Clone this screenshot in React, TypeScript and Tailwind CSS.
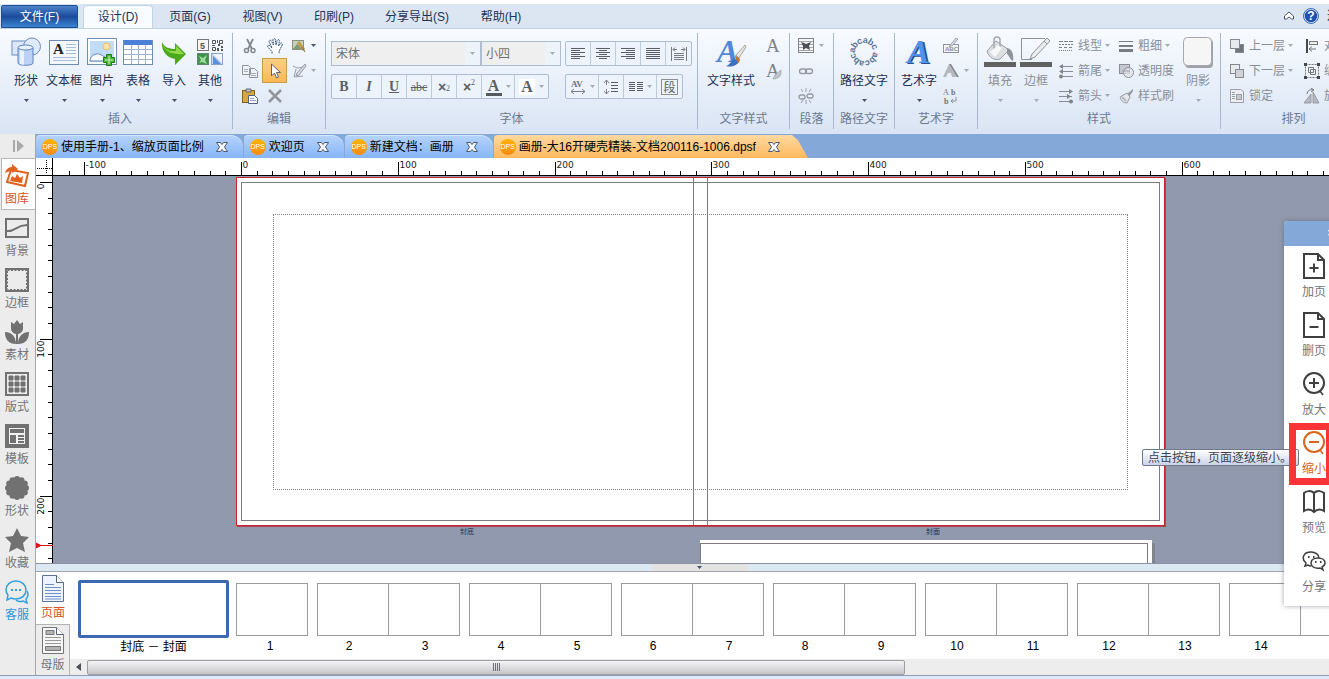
import React from 'react';

type Kids = { children?: React.ReactNode };

/* ---------- small building blocks ---------- */

function Caret({ dim = false, className = '' }: { dim?: boolean; className?: string }) {
  return (
    <svg viewBox="0 0 5 3" className={`w-[5px] h-[3px] shrink-0 ${className}`} aria-hidden="true">
      <path d="M0 0h5L2.5 3z" fill={dim ? '#a3abb8' : '#44526b'} />
    </svg>
  );
}

function Svg({ size = 16, children }: Kids & { size?: number }) {
  return (
    <svg width={size} height={size} viewBox={`0 0 ${size} ${size}`} fill="none" className="shrink-0" aria-hidden="true">
      {children}
    </svg>
  );
}

function Group({ title, className = '', children }: Kids & { title: string; className?: string }) {
  return (
    <section aria-label={title} className={`h-[96px] shrink-0 flex flex-col border-r border-[#a9b8cd] ${className}`}>
      <div className="h-[78px] flex">{children}</div>
      <div className="text-center leading-4 text-[#6b7a92]">{title}</div>
    </section>
  );
}

function BigButton({ label, icon, caret = true, dim = false, className = 'w-9' }: {
  label: string; icon: React.ReactNode; caret?: boolean; dim?: boolean; className?: string;
}) {
  return (
    <button type="button" className={`h-[78px] shrink-0 flex flex-col items-center whitespace-nowrap ${className}`}>
      <span className="h-[38px] flex items-center">{icon}</span>
      <span className={`mt-0.5 leading-4 ${dim ? 'text-[#8a8f97]' : 'text-[#1c3257]'}`}>{label}</span>
      {caret && <Caret dim={dim} className="mt-2.5" />}
    </button>
  );
}

function SmallButton({ label, className = '', children }: Kids & { label: string; className?: string }) {
  return (
    <button type="button" aria-label={label} className={`h-[25px] shrink-0 flex items-center justify-center ${className}`}>
      {children}
    </button>
  );
}

function ListButton({ label, icon, caret = false }: { label: string; icon: React.ReactNode; caret?: boolean }) {
  return (
    <button type="button" className="h-[25px] flex items-center whitespace-nowrap text-[#8a8f97]">
      {icon}
      <span className="ml-1">{label}</span>
      {caret && <Caret dim className="ml-[3px]" />}
    </button>
  );
}

function ToolStrip({ children }: Kids) {
  return (
    <div className="h-[25px] flex border border-[#adbdd2] rounded-xs divide-x divide-[#bccadc] bg-[#edf3fa] text-[#5c5f66]">
      {children}
    </div>
  );
}

function Cell({ label, caret = false, children }: Kids & { label: string; caret?: boolean }) {
  return (
    <button type="button" aria-label={label} className={`flex items-center justify-center ${caret ? 'w-[33px] gap-1' : 'w-[25px]'}`}>
      {children}
      {caret && <Caret dim />}
    </button>
  );
}

function Picker({ label, value, className }: { label: string; value: string; className: string }) {
  return (
    <label className={`relative block h-[25px] ${className}`}>
      <select aria-label={label} className="w-full h-full appearance-none rounded-none border border-[#adbdd2] bg-[#efefef] pl-1 pr-4 text-[#6f6f6f]">
        <option>{value}</option>
      </select>
      <span className="pointer-events-none absolute inset-y-px right-px w-[15px] flex items-center justify-center bg-[#eef3fa]">
        <Caret dim />
      </span>
    </label>
  );
}

const SERIF = 'Liberation Serif, serif';
const SANS = 'Liberation Sans, sans-serif';

/* ---------- ribbon icons ---------- */

const ShapesIcon = () => (
  <Svg size={30}>
    <rect x="1" y="4" width="17" height="14" fill="#dce8f8" stroke="#6a8dbd" />
    <circle cx="21" cy="9.500" r="8.500" fill="#dfeafa" stroke="#6a8dbd" />
    <path d="M7 11v15c0 3 15 3 15 0V11z" fill="#bcd3f5" stroke="#5d82bd" />
    <path d="M9 12v15l4 1V12z" fill="#fff" opacity=".7" />
    <ellipse cx="14.500" cy="10.500" rx="7.500" ry="2.500" fill="#e9f2ff" stroke="#5d82bd" />
  </Svg>
);

const TextBoxIcon = () => (
  <Svg size={30}>
    <rect x=".5" y="3.500" width="29" height="24" fill="#f4f8fd" stroke="#6f8db5" />
    <path d="M17 7.500h10M17 10.500h10M17 13.500h10M17 16.500h10M4 20.500h23M4 23.500h23" stroke="#a9bcd8" />
    <text x="4" y="17" fontSize="15" fontWeight="700" fill="#222" fontFamily={SERIF}>A</text>
  </Svg>
);

const PictureIcon = () => (
  <Svg size={30}>
    <rect x=".5" y="1.500" width="29" height="26" fill="#fff" stroke="#6f8db5" />
    <rect x="3" y="4" width="24" height="21" fill="#c1dcf6" />
    <circle cx="19.500" cy="9.500" r="3.500" fill="#fbe3a8" stroke="#eebf6d" />
    <path d="M3 24c0-4 3-6 6-7 4-1 6 2 9 3l4 4z" fill="#fff" stroke="#5980ba" />
    <path d="M19.500 17.500h5v3h3v5h-3v3h-5v-3h-3v-5h3z" fill="#4cb83b" stroke="#21791c" />
    <path d="M22 19v8M18 23h8" stroke="#c6f3b5" />
  </Svg>
);

const TableIcon = () => (
  <Svg size={30}>
    <rect x=".5" y="3.500" width="29" height="24" fill="#fff" stroke="#6f8db5" />
    <path d="M1 3h28v5H1z" fill="#4d7fd6" />
    <path d="M1 12.500h28M1 17.500h28M1 22.500h28M8.500 8v19M15.500 8v19M22.500 8v19" stroke="#9fb3cf" />
  </Svg>
);

const ImportIcon = () => (
  <Svg size={28}>
    <path d="M2 4c2 5 7 7 13 7V5l11 11-11 11v-6C7 20 1 13 2 4z" fill="#4ea81b" />
    <path d="M3 7c3 6 7 6 13 6V8l8 8C13 17 5 14 3 7z" fill="#8edb4a" />
  </Svg>
);

const OtherIcon = () => (
  <Svg size={28}>
    <rect x="1.500" y="1.500" width="11" height="11" fill="#f6f6f6" stroke="#777" />
    <text x="4" y="10.500" fontSize="9" fontWeight="700" fill="#555" fontFamily={SANS}>5</text>
    <path d="M16.500 2.500h3v3h-3zM23.500 2.500h3v3h-3zM16.500 9.500h3v3h-3z" stroke="#555" />
    <path d="M21 2h1v3h-1zM22 6h2v2h-2zM25 8h2v2h-2zM21 10h2v3h-2zM25 11h2v2h-2zM16 7h3v1h-3z" fill="#555" />
    <rect x="1.500" y="15.500" width="11" height="11" fill="#3b9448" stroke="#60856b" />
    <path d="M3 18l4 2 4-3-2 5 2 4-5-2-3 1 2-3z" fill="#9fdca0" />
    <rect x="15.500" y="15.500" width="11" height="11" fill="#c3d6f5" stroke="#8aa2cc" />
    <path d="M17 16h9v9z" fill="#f0f5fd" />
    <path d="M17 18l8 8h-8z" fill="#5f8be0" />
  </Svg>
);

const CutIcon = () => (
  <Svg>
    <path d="M5 1l5 10M11 1L6 11" stroke="#83878e" strokeWidth="1.800" />
    <circle cx="4.500" cy="12.500" r="2" stroke="#83878e" strokeWidth="1.500" />
    <circle cx="11" cy="12.500" r="2" stroke="#83878e" strokeWidth="1.500" />
  </Svg>
);

const HandIcon = () => (
  <Svg>
    <path d="M5 15.500v-2L.8 9c-.8-1.500 1-2.500 2.400-1L5 10 2.200 4c-.6-1.800 1.600-2.400 2.300-.8L6.500 7 6 2C6 .2 8.200.2 8.400 2L9 7l1.200-4.500c.5-1.600 2.500-1 2.200.7L11.500 8l2-2.500c1-1.200 2.500 0 1.700 1.300L12 13.500v2" fill="#fff" stroke="#34537c" strokeDasharray="2 .6" />
  </Svg>
);

const EditPictureIcon = () => (
  <Svg>
    <rect x="1.500" y="2.500" width="11" height="9" fill="#c3d4bb" stroke="#8a8f80" />
    <path d="M2 11l4-5 5 5z" fill="#7f9a75" />
    <path d="M7 4l6 8" stroke="#c39a4b" strokeWidth="3" />
    <path d="M11 9l3 5" stroke="#7c6a4c" />
  </Svg>
);

const CopyIcon = () => (
  <Svg>
    <path d="M.5 2.500h6l2 2v7h-8zM7.500 5.500h5l3 3v6h-8z" fill="#eef1f5" stroke="#8e949e" />
    <path d="M2 6.500h4M2 8.500h4M9 10.500h5M9 12.500h5" stroke="#a7adb6" />
  </Svg>
);

const PointerIcon = () => (
  <Svg>
    <path d="M4.500 1v12l3-3 2 5 2-1-2-4.500h4z" fill="#fff" stroke="#56617a" />
  </Svg>
);

const NodeEditIcon = () => (
  <Svg>
    <path d="M2 3l4 2 7-1M3 14l2-8M3 14l9-1" stroke="#9aa0a9" />
    <path d="M14 1L6 10l-1 3 3-1 7-9z" fill="#d5d9df" stroke="#989ea7" />
  </Svg>
);

const PasteIcon = () => (
  <Svg size={18}>
    <rect x="1.500" y="3.500" width="12" height="12" fill="#d9a83c" stroke="#816321" />
    <path d="M5 2h5v3H5z" fill="#bcc2cc" stroke="#666" />
    <path d="M7.500 8.500h6l3 3v5h-9z" fill="#fff" stroke="#4d6186" />
    <path d="M9 11.500h4M9 13.500h6" stroke="#8ca0c2" />
  </Svg>
);

const DeleteIcon = () => (
  <Svg>
    <path d="M2 2l12 12M14 2L2 14" stroke="#929499" strokeWidth="2.500" />
  </Svg>
);

function LinesIcon({ rows }: { rows: [number, number][] }) {
  return (
    <Svg>
      {rows.map(([a, b], i) => (
        <path key={i} d={`M${a} ${2.5 + i * 2}H${b}`} stroke="#595d64" />
      ))}
    </Svg>
  );
}

const ALIGN: { label: string; rows: [number, number][] }[] = [
  { label: '左对齐', rows: [[1, 15], [1, 10], [1, 15], [1, 10], [1, 15], [1, 10]] },
  { label: '居中', rows: [[1, 15], [4, 12], [1, 15], [4, 12], [1, 15], [4, 12]] },
  { label: '右对齐', rows: [[1, 15], [6, 15], [1, 15], [6, 15], [1, 15], [6, 15]] },
  { label: '两端对齐', rows: [[1, 15], [1, 15], [1, 15], [1, 15], [1, 15], [1, 15]] },
];

const JustifyAllIcon = () => (
  <Svg>
    <path d="M.5 1v14M15.500 1v14M3 7.500h10M3 9.500h10M3 11.500h10M3 13.500h10" stroke="#777b82" />
    <path d="M2 3.500h4M10 3.500h4M4 1.500l-2 2 2 2M12 1.500l2 2-2 2" stroke="#777b82" />
  </Svg>
);

const SpacingIcon = () => (
  <Svg>
    <text x="1" y="8" fontSize="9" fontWeight="700" fill="#6b6e74" fontFamily={SERIF}>AV</text>
    <path d="M1 12.500h14M4 10l-3 2.500L4 15M12 10l3 2.500-3 2.500" stroke="#7b7f86" />
  </Svg>
);

const LineHeightIcon = () => (
  <Svg>
    <path d="M3.500 1v5M3.500 10v5M1 4l2.500-3L6 4M1 12l2.500 3L6 12" stroke="#7b7f86" />
    <path d="M8 3.500h7M8 6.500h7M8 9.500h7M8 12.500h7" stroke="#595d64" />
  </Svg>
);

const ColumnsIcon = () => (
  <Svg size={14}>
    <path d="M0 2.500h6M8 2.500h6M0 4.500h6M8 4.500h6M0 6.500h6M8 6.500h6M0 8.500h6M8 8.500h6M0 10.500h6M8 10.500h6" stroke="#595d64" />
  </Svg>
);

const TextStyleIcon = () => (
  <Svg size={32}>
    <text x="2" y="26" fontSize="32" fontWeight="700" fontStyle="italic" fill="#4f87da" fontFamily={SERIF}>A</text>
    <path d="M30 9l-9 10 3 3 7-11z" fill="#e9e5df" stroke="#8d8478" strokeWidth=".7" />
    <path d="M20 19l5 4c0 3-2 5-4 5z" fill="#b9783a" />
    <path d="M19 22l4 4c-2 5-8 5-12 4 4-1 5-5 8-8z" fill="#3f6fbf" />
  </Svg>
);

function LetterA({ brush = false }: { brush?: boolean }) {
  return (
    <Svg size={18}>
      <text x="2" y="15" fontSize="19" fill="#7f838a" fontFamily={SERIF}>A</text>
      {brush && <path d="M17 8l-6 5-2 4c4 0 7-2 8-5z" fill="#c2c6cc" stroke="#9499a1" strokeWidth=".6" />}
    </Svg>
  );
}

const WrapIcon = () => (
  <Svg>
    <rect x=".5" y=".5" width="15" height="14" fill="#f5f5f5" stroke="#80848b" />
    <path d="M1 3.500h14M1 6.500h14M1 9.500h14M1 12.500h14" stroke="#a4a8ae" />
    <path d="M3 4l3 1 2 1 5-2-2 4 1 4-4-2-3 2v-4z" fill="#4b4e54" />
  </Svg>
);

const LinkIcon = () => (
  <Svg>
    <rect x="1.500" y="6" width="7" height="4.500" rx="2.200" stroke="#969ba3" strokeWidth="1.400" />
    <rect x="7.500" y="6" width="7" height="4.500" rx="2.200" stroke="#969ba3" strokeWidth="1.400" />
  </Svg>
);

const UnlinkIcon = () => (
  <Svg>
    <rect x="1" y="7" width="6" height="4" rx="2" stroke="#969ba3" strokeWidth="1.300" />
    <rect x="9" y="6" width="6" height="4" rx="2" stroke="#969ba3" strokeWidth="1.300" />
    <path d="M8 0v4M3 1l2 3M13 1l-2 3M8 12v4M3 15l2-3M13 15l-2-3" stroke="#9da2a9" />
  </Svg>
);

const PathTextIcon = () => (
  <Svg size={32}>
    {'abcabcabcabc'.split('').map((ch, i) => (
      <text key={i} x="16" y="7" textAnchor="middle" fontSize="9" fontWeight="700" fill="#5b7495" fontFamily={SANS} transform={`rotate(${i * 29 - 255} 16 16)`}>
        {ch}
      </text>
    ))}
  </Svg>
);

const ArtIcon = () => (
  <Svg size={32}>
    <text x="6" y="28" fontSize="34" fontWeight="700" fontStyle="italic" fill="#2a4f94" fontFamily={SERIF}>A</text>
    <text x="4" y="27" fontSize="34" fontWeight="700" fontStyle="italic" fill="#4f93ee" fontFamily={SERIF}>A</text>
  </Svg>
);

const ArtEditIcon = () => (
  <Svg>
    <rect x=".5" y="6.500" width="15" height="8" fill="#f3f4f6" stroke="#8f949c" />
    <text x="2" y="13" fontSize="6" fontWeight="700" fill="#8a8e95" fontFamily={SANS}>ABC</text>
    <path d="M13 0L8 6 6 9l4-2 5-6z" fill="#d9dce1" stroke="#8f949c" strokeWidth=".8" />
  </Svg>
);

const ArtShapeIcon = () => (
  <Svg>
    <path d="M6 1L0 14h3l2-4h3l1 4h5z" fill="#b5b9bf" />
    <path d="M6 1l8 13h2L8 1z" fill="#80858d" />
  </Svg>
);

const CaseIcon = () => (
  <Svg>
    <text x="0" y="7" fontSize="8" fontWeight="700" fill="#999ea6" fontFamily={SERIF}>A</text>
    <text x="8" y="7" fontSize="8" fontWeight="700" fill="#6f747c" fontFamily={SERIF}>b</text>
    <text x="1" y="16" fontSize="8" fontWeight="700" fill="#6f747c" fontFamily={SERIF}>b</text>
    <path d="M8 13h5v-4M10 11l-2 2 2 2" stroke="#8a8f97" />
  </Svg>
);

const FillIcon = () => (
  <Svg size={32}>
    <path d="M12 5L3 15c2 7 8 10 13 8l9-9z" fill="#dcdee2" stroke="#9b9fa6" />
    <path d="M10 13V4c0-4 6-4 6 0v9" stroke="#a4a8ae" strokeWidth="1.500" />
    <path d="M23 12c5 1 7 6 6 13-3-1-4-6-6-7z" fill="#909399" />
    <path d="M6 16l8-7 4 3-7 9z" fill="#f6f7f8" />
    <path d="M0 26h32v5H0z" fill="#606163" />
  </Svg>
);

const BorderIcon = () => (
  <Svg size={32}>
    <path d="M25 2.500H1.500v21H12" stroke="#8f9399" />
    <path d="M27 2l3 3L15 21l-5 2 2-5z" fill="#ebecee" stroke="#909399" />
    <path d="M24 5l3 3" stroke="#909399" />
    <path d="M0 26h32v5H0z" fill="#606163" />
  </Svg>
);

const LineTypeIcon = () => (
  <Svg>
    <path d="M1 3.500h14" stroke="#7d8188" strokeDasharray="4 1" />
    <path d="M1 6.500h14" stroke="#7d8188" strokeDasharray="2 1" />
    <path d="M1 9.500h14" stroke="#7d8188" strokeDasharray="3 2" />
    <path d="M1 12.500h14" stroke="#7d8188" strokeDasharray="1 1" />
  </Svg>
);

const TailIcon = () => (
  <Svg>
    <path d="M3 3.500h12M3 8.500h12M3 13.500h12" stroke="#898d94" />
    <path d="M5 1L1 3.500 5 6zM5 6L1 8.500 5 11z" fill="#7f838a" />
    <circle cx="3" cy="13.500" r="2" fill="#7f838a" />
  </Svg>
);

const HeadIcon = () => (
  <Svg>
    <path d="M1 3.500h13M1 8.500h13M1 13.500h13" stroke="#898d94" />
    <path d="M11 1l4 2.500L11 6zM9 6l4 2.500L9 11z" fill="#7f838a" />
    <circle cx="13" cy="13.500" r="2" fill="#7f838a" />
  </Svg>
);

const WeightIcon = () => (
  <Svg>
    <path d="M1 3.500h14" stroke="#777b82" />
    <path d="M1 8h14" stroke="#777b82" strokeWidth="2" />
    <path d="M1 12.500h14" stroke="#777b82" strokeWidth="3" />
  </Svg>
);

const OpacityIcon = () => (
  <Svg>
    <rect x="1.500" y="1.500" width="10" height="9" fill="#c5c9cf" stroke="#8a8f97" />
    <circle cx="10.500" cy="9.500" r="5" fill="#e3e5e9" fillOpacity=".7" stroke="#8a8f97" />
    <path d="M4 8h8" stroke="#a2a6ad" />
  </Svg>
);

const FormatBrushIcon = () => (
  <Svg>
    <path d="M15 1l-6 5 2 3 4-6z" fill="#94989f" />
    <path d="M9 5L2 9c1 4 4 6 7 6l3-6z" fill="#e6e8eb" stroke="#999ea5" />
    <path d="M4 9l4 4" stroke="#b5b9bf" strokeWidth="2" />
  </Svg>
);

const ShadowIcon = () => (
  <Svg size={32}>
    <rect x="3" y="3" width="28" height="29" rx="4" fill="#9fa3a9" />
    <rect x="1.500" y="1.500" width="28" height="28" rx="4" fill="#f6f6f6" stroke="#a5a8ad" />
  </Svg>
);

function StackIcon({ front }: { front: boolean }) {
  return (
    <Svg>
      <rect x="6.500" y="6.500" width="8" height="8" fill={front ? '#6f737a' : '#e8eaed'} stroke="#858a92" />
      <rect x="1.500" y="1.500" width="9" height="9" fill="#e8eaed" stroke="#858a92" />
      {!front && <rect x="6.500" y="6.500" width="8" height="8" fill="#d0d3d8" stroke="#858a92" />}
    </Svg>
  );
}

const LockIcon = () => (
  <Svg>
    <path d="M1.500 1.500h10l3 2v11h-13z" fill="#eceef1" stroke="#9ba0a7" />
    <path d="M3 4.500h3M3 6.500h3M3 8.500h3M3 10.500h3" stroke="#9ba0a7" />
    <rect x="7.500" y="6.500" width="5" height="5" fill="#c5c8cd" stroke="#9ba0a7" />
  </Svg>
);

const AlignObjIcon = () => (
  <Svg>
    <path d="M3 1v14" stroke="#45484d" strokeWidth="2" />
    <rect x="5.500" y="3.500" width="8" height="3" fill="#eee" stroke="#777" />
    <path d="M12 11H5M8 8.500L5 11l3 2.500" stroke="#777" />
  </Svg>
);

const GroupObjIcon = () => (
  <Svg>
    <path d="M1.500 1.500h13v13h-13z" stroke="#777" strokeDasharray="2 1" />
    <path d="M4.500 4.500h5v5h-5zM6.500 6.500h5v5h-5z" stroke="#777" />
    <path d="M0 0h3v3H0zM13 0h3v3h-3zM0 13h3v3H0zM13 13h3v3h-3z" fill="#44474d" />
  </Svg>
);

const RotateIcon = () => (
  <Svg>
    <path d="M7 6v9H0zM9 4l6 11H9z" fill="#b6bac0" stroke="#8a8f97" strokeWidth=".8" />
    <path d="M3 6c0-3 3-5 6-4M7 0l3 2-3 2" stroke="#777" />
  </Svg>
);

/* ---------- header ---------- */

const MENU = [
  { label: '页面(G)', w: 'w-[74px]' },
  { label: '视图(V)', w: 'w-[71px]' },
  { label: '印刷(P)', w: 'w-[72px]' },
  { label: '分享导出(S)', w: 'w-[94px]' },
  { label: '帮助(H)', w: 'w-[74px]' },
];

function MenuBar() {
  return (
    <nav className="flex h-6 bg-[#dbe6f2] text-[#1c3257] overflow-hidden whitespace-nowrap">
      <button type="button" className="ml-px mt-px w-[77px] shrink-0 rounded-t-xs border border-[#1f4c93] bg-linear-to-b from-[#4d83cb] via-[#1c4b9b] via-50% to-[#3b84cf] text-white">
        文件(F)
      </button>
      <button type="button" className="ml-[5px] mt-px w-[70px] shrink-0 rounded-t-sm border border-b-0 border-[#c3d3e6] bg-[#f9fcff]">设计(D)</button>
      {MENU.map((m) => (
        <button key={m.label} type="button" className={`shrink-0 pt-0.5 ${m.w}`}>{m.label}</button>
      ))}
      <div className="ml-auto shrink-0 flex items-center">
        <button type="button" aria-label="收起功能区" className="mr-2">
          <Svg size={12}>
            <path d="M1.500 6L6 2l4.500 4v3H8.500L6 7 3.500 9h-2z" fill="#fff" stroke="#45536b" />
          </Svg>
        </button>
        <button type="button" aria-label="帮助">
          <Svg>
            <circle cx="8" cy="8" r="7" fill="#1f52ae" stroke="#d4e2f6" strokeWidth="1.500" />
            <circle cx="8" cy="8" r="7.500" stroke="#426bb0" />
            <text x="8" y="12" textAnchor="middle" fontSize="12" fontWeight="700" fill="#fff" fontFamily={SANS}>?</text>
          </Svg>
        </button>
        <button type="button" className="ml-2 -mr-[22px]">选项</button>
      </div>
    </nav>
  );
}

function Ribbon() {
  return (
    <div className="h-[106px] shrink-0 flex overflow-hidden border-t border-[#c3d3e6] bg-linear-to-b from-[#f8fbff] to-[#d9e4f4] pt-1">
      <Group title="插入" className="w-[233px] pl-2">
        <BigButton label="形状" icon={<ShapesIcon />} />
        <BigButton label="文本框" icon={<TextBoxIcon />} className="w-10" />
        <BigButton label="图片" icon={<PictureIcon />} />
        <BigButton label="表格" icon={<TableIcon />} />
        <BigButton label="导入" icon={<ImportIcon />} />
        <BigButton label="其他" icon={<OtherIcon />} />
      </Group>

      <Group title="编辑" className="w-[93px]">
        <div className="pl-1 flex">
          <div className="w-[25px]">
            <SmallButton label="剪切" className="w-full"><CutIcon /></SmallButton>
            <SmallButton label="复制" className="w-full"><CopyIcon /></SmallButton>
            <SmallButton label="粘贴" className="w-full"><PasteIcon /></SmallButton>
          </div>
          <div className="w-[25px]">
            <SmallButton label="平移" className="w-full"><HandIcon /></SmallButton>
            <SmallButton label="选择" className="w-full border border-[#c99c4e] bg-linear-to-b from-[#fbcf83] to-[#ffb852]"><PointerIcon /></SmallButton>
            <SmallButton label="删除" className="w-full"><DeleteIcon /></SmallButton>
          </div>
          <div className="pl-1">
            <SmallButton label="编辑图片" className="gap-1"><EditPictureIcon /><Caret /></SmallButton>
            <SmallButton label="编辑节点" className="gap-1"><NodeEditIcon /><Caret dim /></SmallButton>
          </div>
        </div>
      </Group>

      <Group title="字体" className="w-[372px]">
        <div className="flex flex-col gap-2 pl-[5px] pt-2">
          <div className="flex">
            <Picker label="字体" value="宋体" className="w-[150px]" />
            <Picker label="字号" value="小四" className="w-20" />
            <div className="ml-1">
              <ToolStrip>
                {ALIGN.map((a) => (
                  <Cell key={a.label} label={a.label}><LinesIcon rows={a.rows} /></Cell>
                ))}
                <Cell label="分散对齐"><JustifyAllIcon /></Cell>
              </ToolStrip>
            </div>
          </div>
          <div className="flex font-['Liberation_Serif',serif]">
            <ToolStrip>
              <Cell label="加粗"><b className="text-sm">B</b></Cell>
              <Cell label="斜体"><b className="text-sm italic">I</b></Cell>
              <Cell label="下划线"><b className="text-sm underline">U</b></Cell>
              <Cell label="删除线"><span className="line-through">abc</span></Cell>
              <Cell label="下标"><b className="text-sm font-['Liberation_Sans',sans-serif]">×</b><sub className="text-[8px]">2</sub></Cell>
              <Cell label="上标"><b className="text-sm font-['Liberation_Sans',sans-serif]">×</b><sup className="text-[8px]">2</sup></Cell>
              <Cell label="文字颜色" caret><b className="w-4 border-b-3 border-[#55585e] text-base leading-[15px]">A</b></Cell>
              <Cell label="背景颜色" caret><b className="w-4 bg-white text-base leading-4">A</b></Cell>
            </ToolStrip>
            <div className="ml-4">
              <ToolStrip>
                <Cell label="字间距" caret><SpacingIcon /></Cell>
                <Cell label="行距"><LineHeightIcon /></Cell>
                <Cell label="分栏" caret><ColumnsIcon /></Cell>
                <Cell label="段落"><span className="border border-[#8b8f96] px-px leading-[14px] font-['Noto_Sans_CJK_SC',sans-serif]">段</span></Cell>
              </ToolStrip>
            </div>
          </div>
        </div>
      </Group>

      <Group title="文字样式" className="w-[92px]">
        <BigButton label="文字样式" icon={<TextStyleIcon />} caret={false} className="w-[66px]" />
        <div>
          <SmallButton label="新建样式"><LetterA /></SmallButton>
          <SmallButton label="修改样式"><LetterA brush /></SmallButton>
        </div>
      </Group>

      <Group title="段落" className="w-11">
        <div className="pl-2">
          <SmallButton label="绕排" className="gap-[5px]"><WrapIcon /><Caret dim /></SmallButton>
          <SmallButton label="链接"><LinkIcon /></SmallButton>
          <SmallButton label="断开链接"><UnlinkIcon /></SmallButton>
        </div>
      </Group>

      <Group title="路径文字" className="w-[61px]">
        <BigButton label="路径文字" icon={<PathTextIcon />} className="w-[60px]" />
      </Group>

      <Group title="艺术字" className="w-[83px]">
        <BigButton label="艺术字" icon={<ArtIcon />} className="w-12" />
        <div>
          <SmallButton label="编辑艺术字"><ArtEditIcon /></SmallButton>
          <SmallButton label="艺术字形状" className="gap-[5px]"><ArtShapeIcon /><Caret dim /></SmallButton>
          <SmallButton label="大小写"><CaseIcon /></SmallButton>
        </div>
      </Group>

      <Group title="样式" className="w-[243px]">
        <BigButton label="填充" icon={<FillIcon />} dim className="w-11" />
        <BigButton label="边框" icon={<BorderIcon />} dim className="w-7" />
        <div className="pl-2">
          <ListButton label="线型" icon={<LineTypeIcon />} caret />
          <ListButton label="箭尾" icon={<TailIcon />} caret />
          <ListButton label="箭头" icon={<HeadIcon />} caret />
        </div>
        <div className="pl-2">
          <ListButton label="粗细" icon={<WeightIcon />} caret />
          <ListButton label="透明度" icon={<OpacityIcon />} />
          <ListButton label="样式刷" icon={<FormatBrushIcon />} />
        </div>
        <BigButton label="阴影" icon={<ShadowIcon />} dim className="ml-auto w-11" />
      </Group>

      <Group title="排列" className="w-[146px]">
        <div className="pl-2">
          <ListButton label="上一层" icon={<StackIcon front />} caret />
          <ListButton label="下一层" icon={<StackIcon front={false} />} caret />
          <ListButton label="锁定" icon={<LockIcon />} />
        </div>
        <div className="pl-[11px]">
          <ListButton label="对齐" icon={<AlignObjIcon />} />
          <ListButton label="编组" icon={<GroupObjIcon />} />
          <ListButton label="旋转" icon={<RotateIcon />} />
        </div>
      </Group>
    </div>
  );
}

/* ---------- left sidebar ---------- */

const LOBES = Array.from({ length: 12 }, (_, i) => {
  const a = (i * Math.PI) / 6;
  return { x: 12 + 9 * Math.cos(a), y: 12 + 9 * Math.sin(a) };
});

const SIDEBAR = [
  {
    label: '图库',
    icon: (
      <g>
        <path d="M6 6l17 3-3 13L2 18z" stroke="#e2621b" strokeWidth="2" fill="#fff" />
        <path d="M5 17l2-5 3 2 2-4 3 4 3-2-1 7z" fill="#e2621b" />
        <path d="M0 9c1-4 4-6 7-6V0l6 5-6 4V7C4 7 2 8 0 9z" fill="#e2621b" />
      </g>
    ),
  },
  { label: '背景', icon: <g stroke="#717171" strokeWidth="2"><path d="M1 3h22v18H1z" /><path d="M2 15c8 1 9-6 20-6" /></g> },
  {
    label: '边框',
    icon: (
      <g stroke="#717171">
        <path d="M1 1h22v22H1z" strokeWidth="2" />
        <path d="M2.500 2.500h19v19h-19z" strokeDasharray="2 1.500" />
      </g>
    ),
  },
  {
    label: '素材',
    icon: (
      <g fill="#717171">
        <path d="M6 2l3 2 3-4 3 4 3-2v6c0 4-3 6-6 6s-6-2-6-6z" />
        <path d="M11 13h2v11h-2z" />
        <path d="M11 24C4 24 0 20 0 12c6 0 11 4 11 12zM13 24c7 0 11-4 11-12-6 0-11 4-11 12z" />
      </g>
    ),
  },
  {
    label: '版式',
    icon: (
      <g>
        <path d="M1 1h22v22H1z" stroke="#717171" strokeWidth="2" />
        <path d="M4 4h4v4H4zM10 4h4v4h-4zM16 4h4v4h-4zM4 10h4v4H4zM10 10h4v4h-4zM16 10h4v4h-4zM4 16h4v4H4zM10 16h4v4h-4zM16 16h4v4h-4z" fill="#717171" stroke="#717171" />
      </g>
    ),
  },
  {
    label: '模板',
    icon: (
      <g fill="#717171">
        <path d="M0 0h24v24H0z" />
        <path d="M4 4h16v16H4z" fill="#f2f2f2" />
        <path d="M5 5h14v4H5zM5 11h6v8H5zM13 11h6v2h-6zM13 14h6v2h-6zM13 17h6v2h-6z" />
      </g>
    ),
  },
  {
    label: '形状',
    icon: (
      <g fill="#717171">
        <circle cx="12" cy="12" r="10" />
        {LOBES.map((p, i) => <circle key={i} cx={p.x} cy={p.y} r="3" />)}
      </g>
    ),
  },
  { label: '收藏', icon: <path d="M12 0l4 8 8 1-6 6 2 9-8-4-8 4 2-9-6-6 8-1z" fill="#717171" /> },
  {
    label: '客服',
    icon: (
      <g stroke="#35a0e0" strokeWidth="1.500">
        <path d="M11 1c6 0 10 4 10 9s-4 9-10 9c-2 0-3 0-5-1l-4 2 1-5C1 13 1 12 1 10c0-5 4-9 10-9z" />
        <path d="M22 11c2 4 0 7-1 8l1 4-4-2c-3 1-5 1-7-1" />
        <path d="M6 10h2M10 10h2M14 10h2" strokeWidth="2" />
      </g>
    ),
  },
];

const sideTone = (label: string) => {
  if (label === '图库') return 'border-[#b9b9b9] bg-white text-[#d2561a]';
  if (label === '客服') return 'border-transparent text-[#2a97d8]';
  return 'border-transparent text-[#757575]';
};

function Sidebar() {
  return (
    <aside className="w-9 shrink-0 border-r border-[#a3a6ab] bg-[#ececec]">
      <button type="button" aria-label="展开" className="w-full h-6 flex items-center justify-center">
        <Svg size={14}>
          <path d="M2 1h2v12H2zM6 1l7 6-7 6z" fill="#a9a9a9" />
        </Svg>
      </button>
      {SIDEBAR.map((s) => (
        <button key={s.label} type="button" className={`ml-px w-[34px] h-[52px] flex flex-col items-center border border-r-0 pr-[3px] pt-[5px] ${sideTone(s.label)}`}>
          <Svg size={24}>{s.icon}</Svg>
          <span className="mt-[3px] leading-4">{s.label}</span>
        </button>
      ))}
    </aside>
  );
}

/* ---------- document tabs and rulers ---------- */

const DOCS = ['使用手册-1、缩放页面比例', '欢迎页', '新建文档：画册', '画册-大16开硬壳精装-文档200116-1006.dpsf'];

function DocTabs() {
  return (
    <div className="h-6 shrink-0 flex gap-px pt-px overflow-hidden bg-[#84a8d8]">
      {DOCS.map((d, i) => {
        const active = i === DOCS.length - 1;
        return (
          <div
            key={d}
            className={`flex shrink-0 items-center whitespace-nowrap pl-1.5 rounded-tl-sm text-black ${
              active
                ? 'pr-7 bg-linear-to-b from-[#ffd9a0] to-[#ffb95c] [clip-path:polygon(0_0,calc(100%-16px)_0,calc(100%-10px)_5px,100%_100%,0_100%)]'
                : 'pr-[15px] rounded-tr-xl border-t border-[#d5e5fb] bg-linear-to-b from-[#b4d2fb] to-[#86b6f7]'
            }`}
          >
            <span className="w-4 h-4 rounded-full bg-linear-to-b from-[#ffb400] to-[#f58a10] text-center text-[7px] leading-4 text-white">DPS</span>
            <span className="ml-[3px]">{d}</span>
            <button type="button" aria-label="关闭" className="ml-3">
              <Svg size={12}>
                <path d="M.5 1.500h4L6 3.500l1.500-2h4L8.500 6l3 4.500h-4L6 8.500l-1.500 2h-4l3-4.500z" fill="#f4f6f9" stroke="#4c5a70" />
              </Svg>
            </button>
          </div>
        );
      })}
    </div>
  );
}

const STEP = 156.8;

function ticks(origin: number, from: number, to: number) {
  const out: { pos: number; major: boolean; value: number }[] = [];
  for (let n = from; n <= to; n++) {
    out.push({ pos: Math.round(origin + (n * STEP) / 10) + 0.5, major: n % 10 === 0, value: n * 10 });
  }
  return out;
}

function HorizontalRuler() {
  return (
    <div className="h-[18px] shrink-0 flex bg-white">
      <svg width="17" height="18" className="shrink-0" aria-hidden="true">
        <path d="M1 10.500h15M10.500 2v14" stroke="#000" strokeDasharray="1 1" />
        <path d="M0 17.500h17M16.500 0v18" stroke="#000" />
      </svg>
      <svg height="18" className="flex-1 min-w-0 overflow-hidden" role="img" aria-label="水平标尺">
        <path d="M0 17.500h3000" stroke="#000" />
        {ticks(188, -11, 110).map((t) => (
          <g key={t.value}>
            <path d={`M${t.pos} ${t.major ? 4 : 13}V18`} stroke="#000" />
            {t.major && <text x={t.pos + 1} y="10" fontSize="9" fontFamily="DejaVu Sans, sans-serif" fill="#222">{t.value}</text>}
          </g>
        ))}
      </svg>
    </div>
  );
}

function VerticalRuler() {
  return (
    <svg width="17" className="h-full shrink-0 bg-white overflow-hidden" role="img" aria-label="垂直标尺">
      <path d="M16.500 0v3000" stroke="#000" />
      {ticks(6, 0, 60).map((t) => (
        <g key={t.value}>
          <path d={`M${t.major ? 4 : 12} ${t.pos}H17`} stroke="#000" />
          {t.major && (
            <text textAnchor="end" transform={`translate(8 ${t.pos + 1}) rotate(-90)`} fontSize="9" fontFamily="DejaVu Sans, sans-serif" fill="#000">
              {t.value}
            </text>
          )}
        </g>
      ))}
      <path d="M0 369.500h17" stroke="#e01010" />
      <path d="M0 366.500l6 3-6 3z" fill="#e01010" />
    </svg>
  );
}

/* ---------- canvas: sheets sit at free positions ---------- */

function Canvas() {
  return (
    <div className="relative flex-1 min-w-0 overflow-hidden bg-[#9099ae]">
      <div className="absolute left-[183px] top-px w-[929px] h-[349px] border border-[#c9252f] bg-white shadow-[1px_1px_0_#b5404d]">
        <div className="absolute inset-1 border border-[#7c7c80]" />
        <div className="absolute left-[456px] inset-y-0 w-[15px] border-x border-[#7c7c80]" />
        <div className="absolute left-9 top-9 w-[855px] h-[276px] border border-dotted border-[#808080]" />
      </div>
      <span className="absolute left-[407px] top-[351px] text-[7px] leading-[9px] text-[#2c3140]">封底</span>
      <span className="absolute left-[873px] top-[351px] text-[7px] leading-[9px] text-[#2c3140]">封面</span>
      <div className="absolute left-[647px] top-[364px] w-[452px] h-[60px] bg-white pr-1 pt-[3px] shadow-[3px_3px_0_#80848e]">
        <div className="h-full border border-[#7c7c80]" />
      </div>
    </div>
  );
}

/* ---------- page strip ---------- */

const SPREADS = [[2, 3], [4, 5], [6, 7], [8, 9], [10, 11], [12, 13], [14, 15]];

function PageIcon({ master = false }: { master?: boolean }) {
  return (
    <svg width="22" height="27" viewBox="0 0 22 27" fill="none" aria-hidden="true">
      <path d="M.5.5h14l7 7v19H.5z" fill={master ? '#f5f5f5' : '#eef4fd'} stroke={master ? '#777' : '#5d7299'} />
      <path d="M14.500.5v7h7" fill="#fff" stroke="#55617a" />
      {master ? (
        <g stroke="#777">
          <path d="M4 3.500h8v4H4zM3.500 19.500h15v4h-15z" fill="#b2b2b2" />
          <path d="M3 10.500h16M3 13.500h16M3 16.500h16" stroke="#999" />
        </g>
      ) : (
        <path d="M3 9.500h9M3 12.500h16M3 15.500h16M3 18.500h16M3 21.500h16M3 24h16" stroke="#6f8fc9" />
      )}
    </svg>
  );
}

function PageStrip() {
  return (
    <section aria-label="页面" className="h-[104px] shrink-0 flex border-t border-[#a0a4aa] bg-white">
      <div className="w-[34px] shrink-0">
        <button type="button" className="w-full h-[52px] flex flex-col items-center pt-[3px] text-[#d2561a]">
          <PageIcon />
          <span className="mt-[3px] leading-4">页面</span>
        </button>
        <button type="button" className="w-full h-[51px] flex flex-col items-center border-t border-r border-[#b4b4b4] bg-[#ececec] pt-0.5 text-[#757575]">
          <PageIcon master />
          <span className="mt-[3px] leading-4">母版</span>
        </button>
      </div>
      <div className="flex-1 min-w-0 flex flex-col">
        <div className="flex-1 flex overflow-hidden text-black">
          <button type="button" className="ml-2 mt-2 w-[151px] shrink-0 flex flex-col">
            <span className="w-full h-[58px] rounded-xs border-3 border-[#3b69b2] bg-white" />
            <span className="w-full text-center leading-[18px]">封底 － 封面</span>
          </button>
          <button type="button" className="ml-[7px] mt-[11px] w-[72px] shrink-0 flex flex-col">
            <span className="w-full h-[53px] border border-[#9a9a9e]" />
            <span className="mt-0.5 w-full pr-1 text-center leading-4">1</span>
          </button>
          <div className="flex pl-[5px] pt-[11px]">
            {SPREADS.map(([left, right]) => (
              <button key={left} type="button" className="w-[152px] shrink-0 flex flex-col">
                <span className="ml-1 w-[143px] h-[53px] flex border border-[#9a9a9e] divide-x divide-[#9a9a9e]">
                  <span className="flex-1" />
                  <span className="flex-1" />
                </span>
                <span className="mt-0.5 flex text-center leading-4">
                  <span className="w-[72px]">{left}</span>
                  <span className="w-20">{right}</span>
                </span>
              </button>
            ))}
          </div>
        </div>
        <div className="h-4 shrink-0 flex items-center bg-[#ededee]">
          <button type="button" aria-label="向左滚动" className="w-[17px] flex justify-center">
            <Svg size={8}><path d="M6 0v8L1 4z" fill="#4c4f56" /></Svg>
          </button>
          <div className="w-[65%] h-[15px] flex items-center justify-center gap-px rounded-xs border border-[#9b9da2] bg-linear-to-b from-[#f5f5f6] to-[#c6c6ca]">
            {[0, 1, 2, 3].map((i) => <span key={i} className="w-px h-2 bg-[#6d6f74]" />)}
          </div>
        </div>
      </div>
    </section>
  );
}

/* ---------- floating tool panel ---------- */

const PANEL = [
  { label: '加页', icon: <path d="M2 1h14l6 6v18H2zM16 1v6h6M12 10.500v9M7.500 15h9" /> },
  { label: '删页', icon: <path d="M2 1h14l6 6v18H2zM16 1v6h6M7.500 15h9" /> },
  { label: '放大', icon: <g><circle cx="12" cy="12" r="10" /><path d="M12 7v10M7 12h10" /><path d="M18 20l3 4" strokeWidth="1.500" /></g> },
  { label: '缩小', icon: <g><circle cx="12" cy="12" r="10" /><path d="M7 12h10" /><path d="M18 20l3 4" strokeWidth="1.500" /></g> },
  { label: '预览', icon: <path d="M12 4v19M12 4C9 1 4 2 2 4v18c3-2 7-2 10 1 3-3 7-3 10-1V4c-2-2-7-3-10 0z" /> },
  {
    label: '分享',
    icon: (
      <g strokeWidth="1.500">
        <path d="M9 18c-1 0-2 0-3-1l-3 1 1-3c-5-4-3-11 5-11 5 0 8 3 8 6" />
        <path d="M16 10c4 0 7 2 7 5 0 2-1 3-3 4l1 3-3-2c-6 1-9-2-9-5s3-5 7-5z" />
        <path d="M6 9h1.500M11 9h1.500M13 14h1.500M18 14h1.500" strokeWidth="2" />
      </g>
    ),
  },
];

function ToolPanel() {
  return (
    <aside className="absolute -right-[15px] top-[221px] w-[60px] h-[385px] rounded-t-sm bg-white shadow-[0_0_5px_#4d536280]">
      <div className="h-[25px] rounded-tl-sm bg-[#84a8d8] pr-2.5 text-right leading-6 text-white">×</div>
      {PANEL.map((p) => {
        const zoomOut = p.label === '缩小';
        return (
          <button
            key={p.label}
            type="button"
            className={`relative w-full h-[59px] flex flex-col items-center pt-[7px] ${zoomOut ? 'text-[#d9651c]' : 'text-[#757575]'}`}
          >
            <svg width="24" height="26" viewBox="0 0 24 26" fill="none" stroke={zoomOut ? '#d9651c' : '#3f3f3f'} strokeWidth="2" aria-hidden="true">
              {p.icon}
            </svg>
            <span className="mt-[5px] leading-4">{p.label}</span>
            {zoomOut && <span className="absolute z-20 left-[5px] top-0 w-11 h-[62px] border-[7px] border-[#fb3437]" />}
          </button>
        );
      })}
    </aside>
  );
}

export default function App() {
  return (
    <div className="relative min-h-screen flex flex-col overflow-hidden bg-[#dfeaf8] pt-1 text-xs cursor-default font-['Liberation_Sans','Noto_Sans_CJK_SC',sans-serif] before:absolute before:inset-x-0 before:top-0 before:h-1 before:bg-white">
      <MenuBar />
      <Ribbon />
      <div className="flex-1 flex border-b border-[#8d9db5] mb-[3px]">
        <Sidebar />
        <main className="flex-1 min-w-0 flex flex-col">
          <DocTabs />
          <HorizontalRuler />
          <div className="flex-1 min-h-0 flex">
            <VerticalRuler />
            <Canvas />
          </div>
          <div className="h-2 shrink-0 flex justify-center border-t border-[#8d93a0] bg-[#dde8f5] pl-[34px]">
            <span className="w-24 flex justify-center bg-[#e3e3e2] pt-0.5"><Caret /></span>
          </div>
          <PageStrip />
        </main>
      </div>
      <ToolPanel />
      <div role="tooltip" className="absolute z-10 right-[30px] top-[449px] w-[157px] h-[17px] rounded-xs border border-[#70788a] bg-linear-to-b from-white to-[#c9d4ea] pl-[5px] leading-4 text-[#40444f] whitespace-nowrap">
        点击按钮，页面逐级缩小。
      </div>
    </div>
  );
}
